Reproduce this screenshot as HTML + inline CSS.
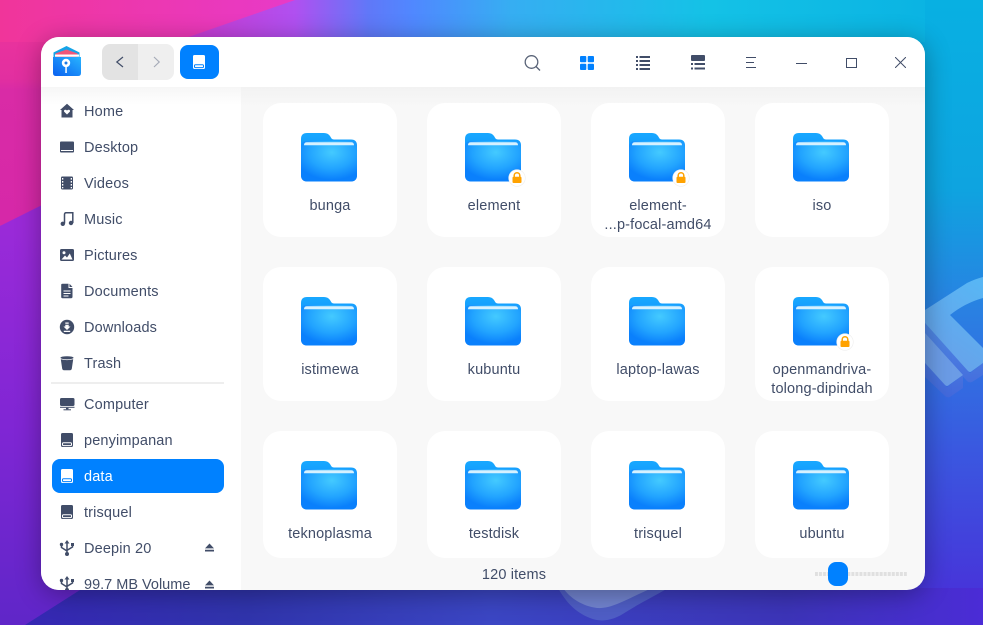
<!DOCTYPE html>
<html><head><meta charset="utf-8"><style>
html,body{margin:0;padding:0;width:983px;height:625px;overflow:hidden;background:#3b42c0}
body{position:relative;font-family:"Liberation Sans","Noto Sans CJK SC",sans-serif;font-size:14.5px;letter-spacing:.15px;color:#414d68}
#bg{position:absolute;left:0;top:0}
#win{position:absolute;left:41px;top:37px;width:884px;height:553px;border-radius:18px;overflow:hidden;background:#f8f8f8;box-shadow:0 4px 26px rgba(0,0,0,.33)}
#side{position:absolute;left:0;top:50px;width:200px;height:503px;background:linear-gradient(#f6f6f6,#fff 18px,#fff)}
#top{position:absolute;left:0;top:0;width:884px;height:50px;background:#fff}
#grad{position:absolute;left:200px;top:50px;width:684px;height:20px;background:linear-gradient(#f2f2f2,#f8f8f8)}
.abs{position:absolute}
.it{position:absolute;left:43px;height:20px;line-height:20px;white-space:nowrap;margin-top:1px}
.ic{position:absolute;left:18px;width:16px;height:16px}
.card{position:absolute;width:134px;height:134px;background:#fff;border-radius:18px}
.card svg{position:absolute;left:38px;top:30px}
.t{position:absolute;left:0;width:134px;top:92px;margin-top:2px;text-align:center;line-height:19px;white-space:nowrap}
</style></head><body>
<svg id="bg" width="983" height="625" viewBox="0 0 983 625">
<defs>
<linearGradient id="tp" x1="0" x2="983" y1="0" y2="0" gradientUnits="userSpaceOnUse">
<stop offset="0" stop-color="#d83ab0"/><stop offset=".19" stop-color="#c83ad0"/><stop offset=".3" stop-color="#b050f0"/><stop offset=".375" stop-color="#6078f8"/><stop offset=".42" stop-color="#5088ff"/><stop offset=".52" stop-color="#36aef2"/><stop offset=".72" stop-color="#14c2e6"/><stop offset="1" stop-color="#08b0e2"/></linearGradient>
<linearGradient id="tpk" x1="0" x2="295" y1="0" y2="0" gradientUnits="userSpaceOnUse"><stop offset="0" stop-color="#f0359a"/><stop offset="1" stop-color="#e83ac8"/></linearGradient>
<linearGradient id="lf" x1="0" x2="0" y1="225" y2="625" gradientUnits="userSpaceOnUse"><stop offset="0" stop-color="#9a2ad8"/><stop offset=".5" stop-color="#8026d4"/><stop offset="1" stop-color="#5f26c8"/></linearGradient>
<linearGradient id="pk" x1="0" x2="0" y1="0" y2="225" gradientUnits="userSpaceOnUse"><stop offset="0" stop-color="#f0359a"/><stop offset=".35" stop-color="#e22fa0"/><stop offset=".4" stop-color="#d92ba6"/><stop offset="1" stop-color="#d628a8"/></linearGradient>
<linearGradient id="rt" x1="0" x2="0" y1="0" y2="625" gradientUnits="userSpaceOnUse"><stop offset="0" stop-color="#08b0e2"/><stop offset=".3" stop-color="#0ea4e0"/><stop offset=".5" stop-color="#2a80e2"/><stop offset=".72" stop-color="#3a58e0"/><stop offset="1" stop-color="#4a2cd8"/></linearGradient>
<linearGradient id="bt" x1="0" x2="983" y1="0" y2="0" gradientUnits="userSpaceOnUse"><stop offset="0" stop-color="#3626b4"/><stop offset=".25" stop-color="#3034ac"/><stop offset=".5" stop-color="#3b46c4"/><stop offset=".8" stop-color="#3c34b8"/><stop offset="1" stop-color="#4b2cd6"/></linearGradient>
<linearGradient id="arm" x1="925" x2="983" y1="370" y2="285" gradientUnits="userSpaceOnUse"><stop offset="0" stop-color="#6a9ee8"/><stop offset="1" stop-color="#58b6f4"/></linearGradient>
<linearGradient id="arms" x1="0" x2="0" y1="330" y2="398" gradientUnits="userSpaceOnUse"><stop offset="0" stop-color="#4f86e2"/><stop offset="1" stop-color="#4268dc"/></linearGradient>
<linearGradient id="f" x1="0" x2="0" y1="0" y2="1"><stop offset="0" stop-color="#18a8ff"/><stop offset="1" stop-color="#0b7dfb"/></linearGradient>
<radialGradient id="fb" cx="55%" cy="28%" r="68%"><stop offset="0" stop-color="#44caff"/><stop offset=".6" stop-color="#22a4ff"/><stop offset="1" stop-color="#0a80fc"/></radialGradient>
<linearGradient id="lg" x1="0" x2="1" y1="1" y2="0"><stop offset="0" stop-color="#0a60f0"/><stop offset="1" stop-color="#28b4ff"/></linearGradient>
<symbol id="folder" viewBox="0 0 56 49">
<path d="M0 6Q0 0 6 0H23Q27 0 29 3L30.500 5.500Q31.500 6.500 33 6.500H50Q56 6.500 56 12.500V42Q56 48.500 49.500 48.500H6.500Q0 48.500 0 42Z" fill="url(#f)"/>
<path d="M0 14Q0 8 6 8H50Q56 8 56 14V42Q56 48.500 49.500 48.500H6.500Q0 48.500 0 42Z" fill="url(#fb)"/>
<path d="M3 12.200V12Q3 9.200 6 9.200H50Q53 9.200 53 12V12.200Z" fill="#d6f1ff"/>
</symbol>
<symbol id="lock" viewBox="0 0 18 18">
<circle cx="9" cy="9" r="8.300" fill="#fff" stroke="#eee" stroke-width=".6"/>
<path d="M6.200 8V6.500a2.800 2.800 0 0 1 5.600 0V8" fill="none" stroke="#ffa200" stroke-width="1.500"/>
<rect x="4.500" y="7.800" width="9" height="6.200" rx="1" fill="#ffa200"/>
</symbol>
<symbol id="disk" viewBox="0 0 16 16">
<path d="M3.500 1H12.500Q14 1 14 2.500V13.500Q14 15 12.500 15H3.500Q2 15 2 13.500V2.500Q2 1 3.500 1Z" fill="currentColor"/>
<rect x="3.500" y="10.800" width="9" height="2.800" rx="1" fill="none" stroke="var(--w,#fff)" stroke-width="1"/>
</symbol>
<symbol id="usb" viewBox="0 0 16 16">
<path d="M8 0L10.500 3.500H5.500Z" fill="#414d68"/>
<path d="M8 3V13M2.500 5V7.500L8 11M13.500 5V7L8 10.300" fill="none" stroke="#414d68" stroke-width="1.500"/>
<circle cx="2.500" cy="4.500" r="1.700" fill="#414d68"/><rect x="12" y="3" width="3" height="3" fill="#414d68"/><circle cx="8" cy="14" r="2" fill="#414d68"/>
</symbol>
<symbol id="ej" viewBox="0 0 10 9"><path d="M5 0L10 5.500H0Z M0 7H10V9H0Z" fill="#414d68"/></symbol>
<pattern id="tk" width="4.040" height="4" patternUnits="userSpaceOnUse"><rect width="3" height="4" fill="#e0e0e0"/></pattern>
</defs>
<rect width="983" height="625" fill="url(#rt)"/>
<rect x="0" y="0" width="983" height="42" fill="url(#tp)"/>
<rect x="925" y="0" width="58" height="625" fill="url(#rt)"/>
<rect x="0" y="588" width="983" height="37" fill="url(#bt)"/>
<polygon points="0,0 60,0 60,205 0,226" fill="url(#pk)"/>
<polygon points="0,0 295,0 174,42 0,42" fill="url(#tpk)"/>
<polygon points="0,226 60,196 60,560 80,590 25,625 0,625" fill="url(#lf)"/>
<!-- decorative arrows right -->
<path d="M925 323L970 373L983 363V375L972 382Q969 383 967 381L925 335Z" fill="url(#arms)"/>
<path d="M925 310L967 283Q975 279 983 277V298Q965 303 950 315L983 348V363L972 371Q970 373 968 371L925 323Z" fill="url(#arm)"/>
<path d="M925 363L947 387L963 375V388L950 397Q947 398 945 396L925 377Z" fill="url(#arms)"/>
<path d="M925 333L963 375L949 385Q947 387 945 385L925 363Z" fill="#6b9ce6"/>
<!-- decorative bottom -->
<path d="M558 588C566 602 575 612 590 618C602 623 614 620 626 612C640 603 655 596 668 588Z" fill="#4f5ec6"/>
<path d="M563 588C570 598 582 606 597 608C612 609 625 600 652 588Z" fill="#7284d0"/>
</svg>

<div id="win">
<div id="top"></div>
<div id="side"></div>
<div id="grad"></div>

<!-- logo -->
<svg class="abs" style="left:11px;top:8px" width="30" height="32" viewBox="0 0 30 32">
<path d="M14.500 1L27.500 7.500V12H1.500V7.500Z" fill="#14a4e8"/>
<path d="M3.500 8.500L14.500 4.500L25.500 8.500V12H3.500Z" fill="#f0567a"/>
<path d="M1 12H29V28Q29 31 26 31H4Q1 31 1 28Z" fill="url(#lg)"/>
<rect x="3" y="9.500" width="24" height="2.200" fill="#fff"/>
<circle cx="14" cy="18" r="4.200" fill="#fff"/><circle cx="14" cy="18" r="1.500" fill="#1a7ae8"/>
<rect x="13.300" y="22" width="1.500" height="6" fill="#fff"/>
</svg>

<!-- nav -->
<div class="abs" style="left:61px;top:7px;width:36px;height:36px;background:#e3e3e3;border-radius:8px 0 0 8px"></div>
<div class="abs" style="left:97px;top:7px;width:36px;height:36px;background:#efefef;border-radius:0 8px 8px 0"></div>
<svg class="abs" style="left:72px;top:18px" width="14" height="14" viewBox="0 0 14 14"><path d="M10 2L3.800 7L10 12" fill="none" stroke="#414d68" stroke-width="1.200"/></svg>
<svg class="abs" style="left:108px;top:18px" width="14" height="14" viewBox="0 0 14 14"><path d="M5 2L10.200 7L5 12" fill="none" stroke="#a6abb8" stroke-width="1.200"/></svg>
<div class="abs" style="left:139px;top:8px;width:39px;height:34px;background:#0081ff;border-radius:8px"></div>
<svg class="abs" style="left:150px;top:17px;--w:#0081ff;color:#fff" width="16" height="16"><use href="#disk"/></svg>

<!-- toolbar -->
<svg class="abs" style="left:480px;top:14px" width="24" height="24" viewBox="0 0 24 24"><circle cx="10.500" cy="11" r="6.300" fill="none" stroke="#5a6478" stroke-width="1.300"/><path d="M15 15.500L19 19.500" stroke="#5a6478" stroke-width="1.300"/></svg>
<svg class="abs" style="left:539px;top:19px" width="14" height="14"><rect width="6.300" height="6.300" rx="1" fill="#0081ff"/><rect x="7.700" width="6.300" height="6.300" rx="1" fill="#0081ff"/><rect y="7.700" width="6.300" height="6.300" rx="1" fill="#0081ff"/><rect x="7.700" y="7.700" width="6.300" height="6.300" rx="1" fill="#0081ff"/></svg>
<svg class="abs" style="left:595px;top:19px" width="14" height="14" fill="#414d68"><rect width="2" height="2"/><rect x="3.500" width="10.500" height="2"/><rect y="4" width="2" height="2"/><rect x="3.500" y="4" width="10.500" height="2"/><rect y="8" width="2" height="2"/><rect x="3.500" y="8" width="10.500" height="2"/><rect y="12" width="2" height="2"/><rect x="3.500" y="12" width="10.500" height="2"/></svg>
<svg class="abs" style="left:650px;top:18px" width="14" height="15" fill="#414d68"><rect width="14" height="6" rx="1"/><rect y="8" width="2" height="2"/><rect x="3.500" y="8" width="10.500" height="2"/><rect y="12.500" width="2" height="2"/><rect x="3.500" y="12.500" width="10.500" height="2"/></svg>
<svg class="abs" style="left:705px;top:20px" width="10" height="11" fill="#414d68"><rect width="10" height="1"/><rect y="5" width="8" height="1"/><rect y="10" width="10" height="1"/></svg>
<div class="abs" style="left:755px;top:26px;width:11px;height:1px;background:#414d68"></div>
<div class="abs" style="left:805px;top:21px;width:9px;height:8px;border:1px solid #414d68"></div>
<svg class="abs" style="left:854px;top:20px" width="11" height="11"><path d="M0 0L11 11M11 0L0 11" stroke="#414d68" stroke-width="1"/></svg>

<!-- sidebar -->
<svg class="ic" style="top:66px" viewBox="0 0 16 16"><path d="M8 .8L15 7H13.500V14.500H2.500V7H1Z" fill="#414d68"/><path d="M8 11.500L5 8.500Q4.800 6.800 6.500 6.800Q7.500 6.800 8 7.600Q8.500 6.800 9.500 6.800Q11.200 6.800 11 8.500Z" fill="#fff"/></svg>
<div class="it" style="top:64px">Home</div>
<svg class="ic" style="top:102px" viewBox="0 0 16 16"><path d="M2 2.500H14Q15 2.500 15 3.500V12.500Q15 13.500 14 13.500H2Q1 13.500 1 12.500V3.500Q1 2.500 2 2.500Z" fill="#414d68"/><rect x="2" y="11" width="12" height="1" fill="#fff"/></svg>
<div class="it" style="top:100px">Desktop</div>
<svg class="ic" style="top:138px" viewBox="0 0 16 16"><rect x="2" y="1.500" width="12" height="13" rx="1.200" fill="#414d68"/><g fill="#fff"><rect x="3" y="3" width="1.300" height="1.600"/><rect x="3" y="6" width="1.300" height="1.600"/><rect x="3" y="9" width="1.300" height="1.600"/><rect x="3" y="12" width="1.300" height="1.300"/><rect x="11.700" y="3" width="1.300" height="1.600"/><rect x="11.700" y="6" width="1.300" height="1.600"/><rect x="11.700" y="9" width="1.300" height="1.600"/><rect x="11.700" y="12" width="1.300" height="1.300"/></g></svg>
<div class="it" style="top:136px">Videos</div>
<svg class="ic" style="top:174px" viewBox="0 0 16 16"><path d="M5.500 12.500V3.500Q5.500 1.800 7 1.800H13.800V12" fill="none" stroke="#414d68" stroke-width="1.500"/><circle cx="3.800" cy="12.800" r="2.200" fill="#414d68"/><circle cx="12" cy="12" r="2.200" fill="#414d68"/></svg>
<div class="it" style="top:172px">Music</div>
<svg class="ic" style="top:210px" viewBox="0 0 16 16"><rect x="1" y="2" width="14" height="12" rx="1.500" fill="#414d68"/><circle cx="5" cy="5.800" r="1.500" fill="#fff"/><path d="M2.500 12.500L6 8.500L8 10.500L10.800 6.500L13.500 12.500Z" fill="#fff"/></svg>
<div class="it" style="top:208px">Pictures</div>
<svg class="ic" style="top:246px" viewBox="0 0 16 16"><path d="M3.500 .8H9.500V5H13.500V14Q13.500 15.200 12.300 15.200H3.500Q2.200 15.200 2.200 14V2Q2.200 .8 3.500 .8ZM10.500 .8L13.500 4H10.500Z" fill="#414d68"/><g fill="#fff"><rect x="4.500" y="7.500" width="7" height="1"/><rect x="4.500" y="10" width="7" height="1"/><rect x="4.500" y="12.500" width="5" height="1"/></g></svg>
<div class="it" style="top:244px">Documents</div>
<svg class="ic" style="top:282px" viewBox="0 0 16 16"><circle cx="8" cy="8" r="7.200" fill="#414d68"/><path d="M6.300 3.500H9.700V4.800H6.300ZM6.300 5.800H9.700V7.500H11.500L8 11L4.500 7.500H6.300ZM4.800 11.800H11.200V13H4.800Z" fill="#fff"/></svg>
<div class="it" style="top:280px">Downloads</div>
<svg class="ic" style="top:318px" viewBox="0 0 16 16"><ellipse cx="8" cy="2.800" rx="6.500" ry="1.600" fill="#414d68"/><path d="M1.800 4.200Q8 6 14.200 4.200L12.800 13.800Q12.500 15.200 11 15.200H5Q3.500 15.200 3.200 13.800Z" fill="#414d68"/></svg>
<div class="it" style="top:316px">Trash</div>
<div class="abs" style="left:10px;top:345px;width:173px;height:2px;background:#eee"></div>
<svg class="ic" style="top:360px" viewBox="0 0 16 16"><rect x="1" y="1" width="14.500" height="8" rx="1.500" fill="#414d68"/><rect x="1" y="9.800" width="14.500" height="1" fill="#414d68"/><rect x="7" y="10.800" width="2.500" height="1.500" fill="#414d68"/><rect x="4.500" y="12.300" width="7.500" height="1" fill="#414d68"/></svg>
<div class="it" style="top:357px">Computer</div>
<svg class="ic" style="top:395px;color:#414d68;--w:#fff"><use href="#disk"/></svg>
<div class="it" style="top:393px">penyimpanan</div>
<div class="abs" style="left:11px;top:422px;width:172px;height:34px;background:#0081ff;border-radius:8px"></div>
<svg class="ic" style="top:431px;color:#fff;--w:#0081ff"><use href="#disk"/></svg>
<div class="it" style="top:429px;color:#fff">data</div>
<svg class="ic" style="top:467px;color:#414d68;--w:#fff"><use href="#disk"/></svg>
<div class="it" style="top:465px">trisquel</div>
<svg class="ic" style="top:503px"><use href="#usb"/></svg>
<div class="it" style="top:501px">Deepin 20</div>
<svg class="abs" style="left:164px;top:506px" width="9" height="9"><use href="#ej"/></svg>
<svg class="ic" style="top:539px"><use href="#usb"/></svg>
<div class="it" style="top:537px;letter-spacing:0">99.7 MB Volume</div>
<svg class="abs" style="left:164px;top:543px" width="9" height="9"><use href="#ej"/></svg>

<!-- cards row 1 -->
<div class="card" style="left:222px;top:66px"><svg width="56" height="49"><use href="#folder"/></svg><div class="t">bunga</div></div>
<div class="card" style="left:386px;top:66px"><svg width="56" height="49"><use href="#folder"/></svg><svg style="left:81px;top:66px" width="18" height="18"><use href="#lock"/></svg><div class="t">element</div></div>
<div class="card" style="left:550px;top:66px"><svg width="56" height="49"><use href="#folder"/></svg><svg style="left:81px;top:66px" width="18" height="18"><use href="#lock"/></svg><div class="t">element-<br>...p-focal-amd64</div></div>
<div class="card" style="left:714px;top:66px"><svg width="56" height="49"><use href="#folder"/></svg><div class="t">iso</div></div>
<!-- row 2 -->
<div class="card" style="left:222px;top:230px"><svg width="56" height="49"><use href="#folder"/></svg><div class="t">istimewa</div></div>
<div class="card" style="left:386px;top:230px"><svg width="56" height="49"><use href="#folder"/></svg><div class="t">kubuntu</div></div>
<div class="card" style="left:550px;top:230px"><svg width="56" height="49"><use href="#folder"/></svg><div class="t">laptop-lawas</div></div>
<div class="card" style="left:714px;top:230px"><svg width="56" height="49"><use href="#folder"/></svg><svg style="left:81px;top:66px" width="18" height="18"><use href="#lock"/></svg><div class="t">openmandriva-<br>tolong-dipindah</div></div>
<!-- row 3 -->
<div class="card" style="left:222px;top:394px;height:127px"><svg width="56" height="49"><use href="#folder"/></svg><div class="t">teknoplasma</div></div>
<div class="card" style="left:386px;top:394px;height:127px"><svg width="56" height="49"><use href="#folder"/></svg><div class="t">testdisk</div></div>
<div class="card" style="left:550px;top:394px;height:127px"><svg width="56" height="49"><use href="#folder"/></svg><div class="t">trisquel</div></div>
<div class="card" style="left:714px;top:394px;height:127px"><svg width="56" height="49"><use href="#folder"/></svg><div class="t">ubuntu</div></div>

<!-- status -->
<div class="abs" style="left:400px;width:146px;top:528px;text-align:center;line-height:20px">120 items</div>
<svg class="abs" style="left:774px;top:535px" width="92" height="4"><rect width="92" height="4" fill="url(#tk)"/></svg>
<div class="abs" style="left:787px;top:525px;width:20px;height:24px;background:#0081ff;border-radius:8px"></div>
</div>
</body></html>
